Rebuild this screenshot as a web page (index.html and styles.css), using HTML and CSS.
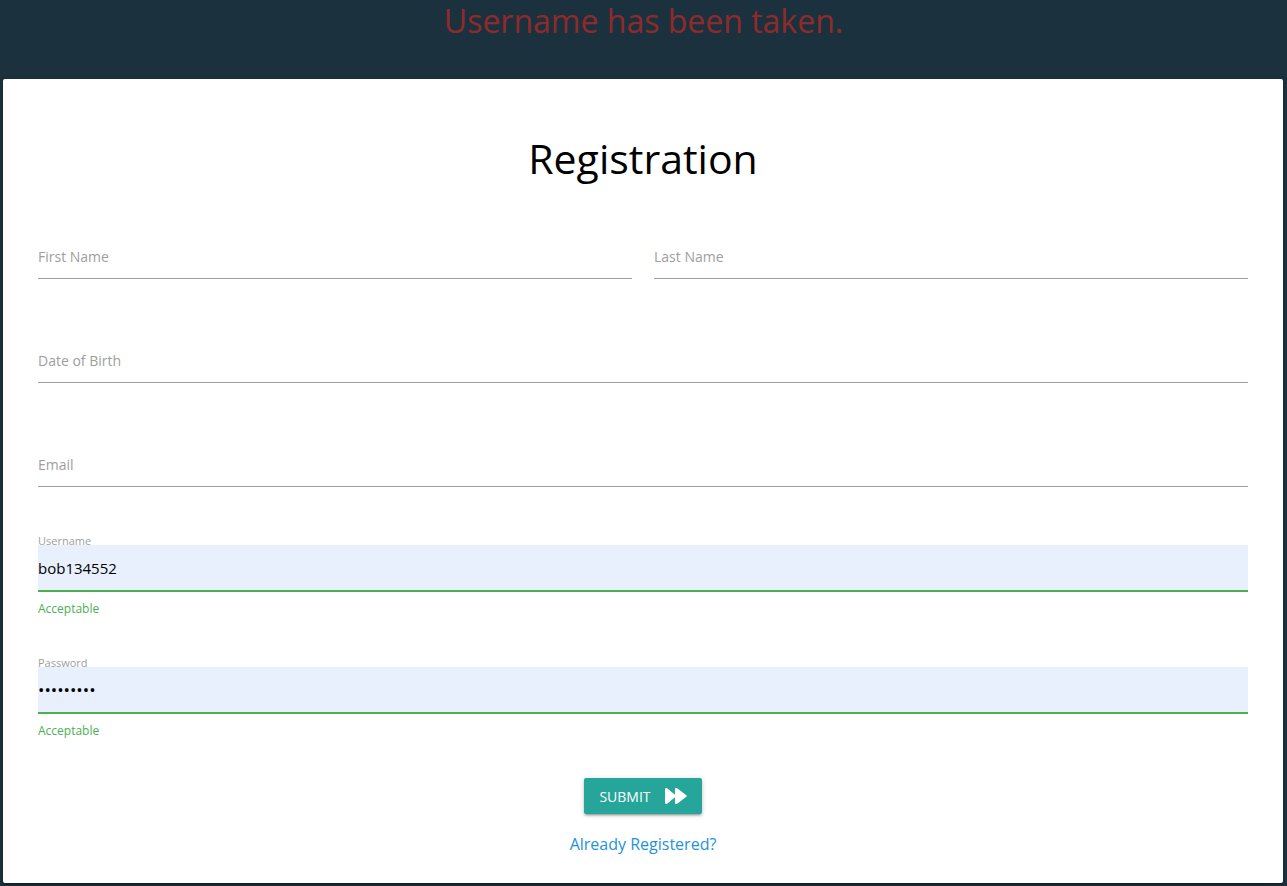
FILE: index.html
```html
<!DOCTYPE html>
<html lang="en">
<head>
<meta charset="utf-8">
<meta name="viewport" content="width=device-width, initial-scale=1">
<title>Registration</title>
<link rel="stylesheet" href="styles.css">
</head>
<body>
<p class="alert" role="alert">Username has been taken.</p>
<main class="card">
  <h1 class="title">Registration</h1>
  <form class="form">
    <div class="row">
      <div class="field">
        <label class="label" for="first">First Name</label>
        <input class="input" id="first" type="text">
      </div>
      <div class="field">
        <label class="label" for="last">Last Name</label>
        <input class="input" id="last" type="text">
      </div>
    </div>
    <div class="field">
      <label class="label" for="dob">Date of Birth</label>
      <input class="input" id="dob" type="text">
    </div>
    <div class="field">
      <label class="label" for="email">Email</label>
      <input class="input" id="email" type="email">
    </div>
    <div class="field">
      <label class="label label-raised" for="username">Username</label>
      <input class="input input-valid" id="username" type="text" value="bob134552">
      <span class="helper">Acceptable</span>
    </div>
    <div class="field">
      <label class="label label-raised" for="password">Password</label>
      <input class="input input-valid input-password" id="password" type="password" value="bob134552">
      <span class="helper">Acceptable</span>
    </div>
    <div class="actions">
      <button class="submit" type="submit">SUBMIT
        <svg class="icon" viewBox="0 0 22 16" aria-hidden="true"><path d="M0 1.300C0 .2 1.200-.4 2.100.3L10 6.700V1.300C10 .2 11.300-.4 12.200.3L21.300 7.200Q22.300 8 21.300 8.800L12.200 15.700C11.300 16.400 10 15.800 10 14.700V9.300L2.100 15.700C1.200 16.400 0 15.800 0 14.700Z"/></svg>
      </button>
      <a class="login" href="#">Already Registered?</a>
    </div>
  </form>
</main>
</body>
</html>
```
FILE: styles.css
```css
* { box-sizing: border-box; }

body {
  margin: 0;
  background: #1b323e;
  font-family: "Open Sans", "Noto Sans", sans-serif;
  color: #000;
}

.alert {
  margin: 0;
  height: 79px;
  font-size: 32px;
  line-height: 42px;
  text-align: center;
  color: #8f2a2c;
}

.card {
  margin: 0 4px 3px 3px;
  padding: 47px 35px 27px;
  background: #fff;
  border-radius: 2px;
  box-shadow: 0 2px 2px rgba(0, 0, 0, .14), 0 3px 1px -2px rgba(0, 0, 0, .12), 0 1px 5px rgba(0, 0, 0, .2);
}

.title {
  margin: 0 0 43px;
  font-size: 41px;
  font-weight: 400;
  line-height: 64px;
  text-align: center;
}

.form {
  display: flex;
  flex-direction: column;
  gap: 58px;
}

.row {
  display: grid;
  grid-template-columns: 1fr 1fr;
  gap: 22px;
}

.field {
  position: relative;
  display: flex;
  flex-direction: column;
}

/* Labels float over their inputs */
.label {
  position: absolute;
  left: 0;
  top: 12px;
  font-size: 14px;
  line-height: 24px;
  color: #9e9e9e;
  cursor: text;
}

.label-raised {
  top: -13px;
  font-size: 11px;
  line-height: 18px;
}

.input {
  width: 100%;
  height: 46px;
  padding: 0;
  border: 0;
  border-bottom: 1px solid #9e9e9e;
  border-radius: 0;
  outline: 0;
  background: transparent;
  font: inherit;
  font-size: 15px;
  color: #000;
}

.input-valid {
  height: 47px;
  background: #e8f0fe;
  border-bottom: 2px solid #4caf50;
}

.input-password {
  font-size: 17px;
}

.helper {
  margin: 8px 0 -9px;
  font-size: 12px;
  line-height: 18px;
  color: #4caf50;
}

.actions {
  display: flex;
  flex-direction: column;
  align-items: center;
  gap: 18px;
  margin-top: -11px;
}

.submit {
  display: flex;
  align-items: center;
  gap: 14px;
  height: 36px;
  padding: 0 15px;
  border: 0;
  border-radius: 2px;
  background: #26a69a;
  box-shadow: 0 2px 2px rgba(0, 0, 0, .14), 0 3px 1px -2px rgba(0, 0, 0, .12), 0 1px 5px rgba(0, 0, 0, .2);
  font: inherit;
  font-size: 14px;
  color: #fff;
  cursor: pointer;
}

.icon {
  width: 22px;
  height: 16px;
  fill: currentColor;
}

.login {
  font-size: 16px;
  line-height: 24px;
  color: #1e92dc;
  text-decoration: none;
}
```
